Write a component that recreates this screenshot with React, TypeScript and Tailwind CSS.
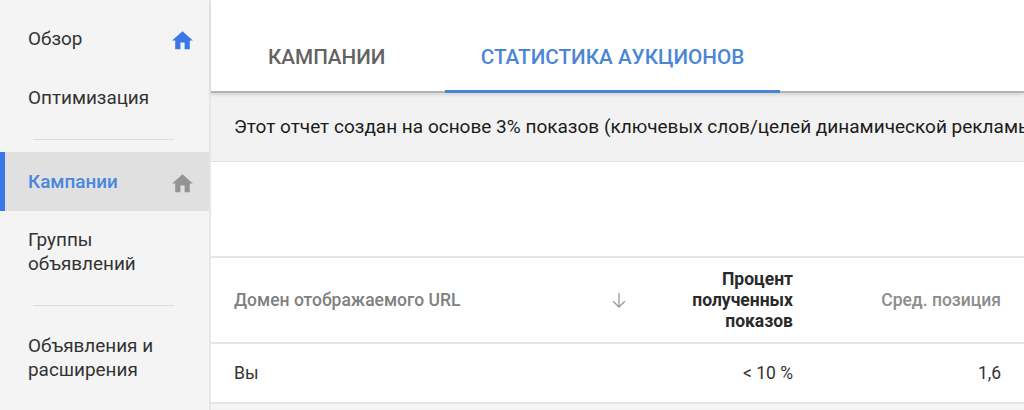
const HomeIcon = ({ className }: { className: string }) => (
  <svg viewBox="0 0 24 24" className={className} fill="currentColor">
    <path d="M10 20.5v-6.5h4v6.5h5v-8.5h3L12 3 2 12h3v8.5z" />
  </svg>
);

const Divider = () => <div className="ml-[33px] mr-[35px] h-px bg-[#dcdcdc]" />;

function Sidebar() {
  return (
    <aside className="w-[211px] h-full shrink-0 bg-[#f4f4f4] border-r-2 border-[#e6e6e6] text-[18.9px] leading-[24px] text-[#333333]">
      <div className="h-[68px] pl-[28px] pr-[14px] pt-[10px] flex justify-between items-center">
        <span>Обзор</span>
        <HomeIcon className="w-[25px] h-[25px] text-[#3b78e7] mt-[3px]" />
      </div>
      <div className="h-[46px] pl-[28px] pt-[18px]">Оптимизация</div>
      <div className="pt-[25px] pb-[12px]">
        <Divider />
      </div>
      <div className="h-[59px] flex items-center justify-between bg-[#e0e0e0] border-l-[5px] border-[#3b78e7] pl-[23px] pr-[14px] font-medium text-[#4a86e0]">
        <span>Кампании</span>
        <HomeIcon className="w-[25px] h-[25px] text-[#949494] mt-[3px]" />
      </div>
      <div className="pl-[28px] pt-[17px]">
        Группы
        <br />
        объявлений
      </div>
      <div className="pt-[29px] pb-[28px]">
        <Divider />
      </div>
      <div className="pl-[28px]">
        Объявления и
        <br />
        расширения
      </div>
    </aside>
  );
}

function Tabs() {
  return (
    <div className="relative z-10 h-[93px] bg-white border-b-2 border-[#b4b4b4] shadow-[0_2px_3px_rgba(0,0,0,0.12)] flex text-[20.7px] leading-[28px] font-medium">
      <div className="w-[234px] pl-[57px] pt-[43px] text-[#636363]">КАМПАНИИ</div>
      <div className="w-[335px] h-[93px] border-b-[3px] border-[#4a86d8] pt-[43px] text-center text-[#4a86d8]">
        СТАТИСТИКА АУКЦИОНОВ
      </div>
    </div>
  );
}

function Table() {
  return (
    <div className="bg-white">
      <div className="h-[88px] flex items-center border-t-2 border-b-2 border-[#e6e6e6] pl-[23px] text-[17.5px] leading-[21px]">
        <div className="w-[373px] font-medium text-[#808080] whitespace-nowrap">Домен отображаемого URL</div>
        <svg viewBox="0 0 24 24" className="w-[20px] h-[20px] ml-[2px] text-[#9a9a9a]" fill="none" stroke="currentColor" strokeWidth="1.6">
          <path d="M12 3.5v17M5 13.5l7 7 7-7" />
        </svg>
        <div className="w-[164px] text-right font-bold text-[#2a2a2a]">
          Процент
          <br />
          полученных
          <br />
          показов
        </div>
        <div className="w-[208px] text-right font-medium text-[#8c8c8c]">Сред. позиция</div>
      </div>
      <div className="h-[60px] flex items-center border-b-2 border-[#e6e6e6] pl-[23px] text-[17.5px] text-[#333333]">
        <div className="w-[395px]">Вы</div>
        <div className="w-[164px] text-right">&lt; 10 %</div>
        <div className="w-[208px] text-right">1,6</div>
      </div>
    </div>
  );
}

export default function App() {
  return (
    <div className="w-[1024px] h-[410px] flex overflow-hidden bg-[#f4f4f4] font-['Roboto',sans-serif]">
      <Sidebar />
      <main className="flex-1 min-w-0">
        <Tabs />
        <div className="h-[69px] flex items-center bg-[#f2f2f2] border-b border-[#e0e0e0] pl-[23px] pt-[1px] text-[19px] text-[#1c1c1c] whitespace-nowrap overflow-hidden">
          Этот отчет создан на основе 3% показов (ключевых слов/целей динамической рекламы
        </div>
        <div className="h-[94px] bg-white" />
        <Table />
      </main>
    </div>
  );
}
